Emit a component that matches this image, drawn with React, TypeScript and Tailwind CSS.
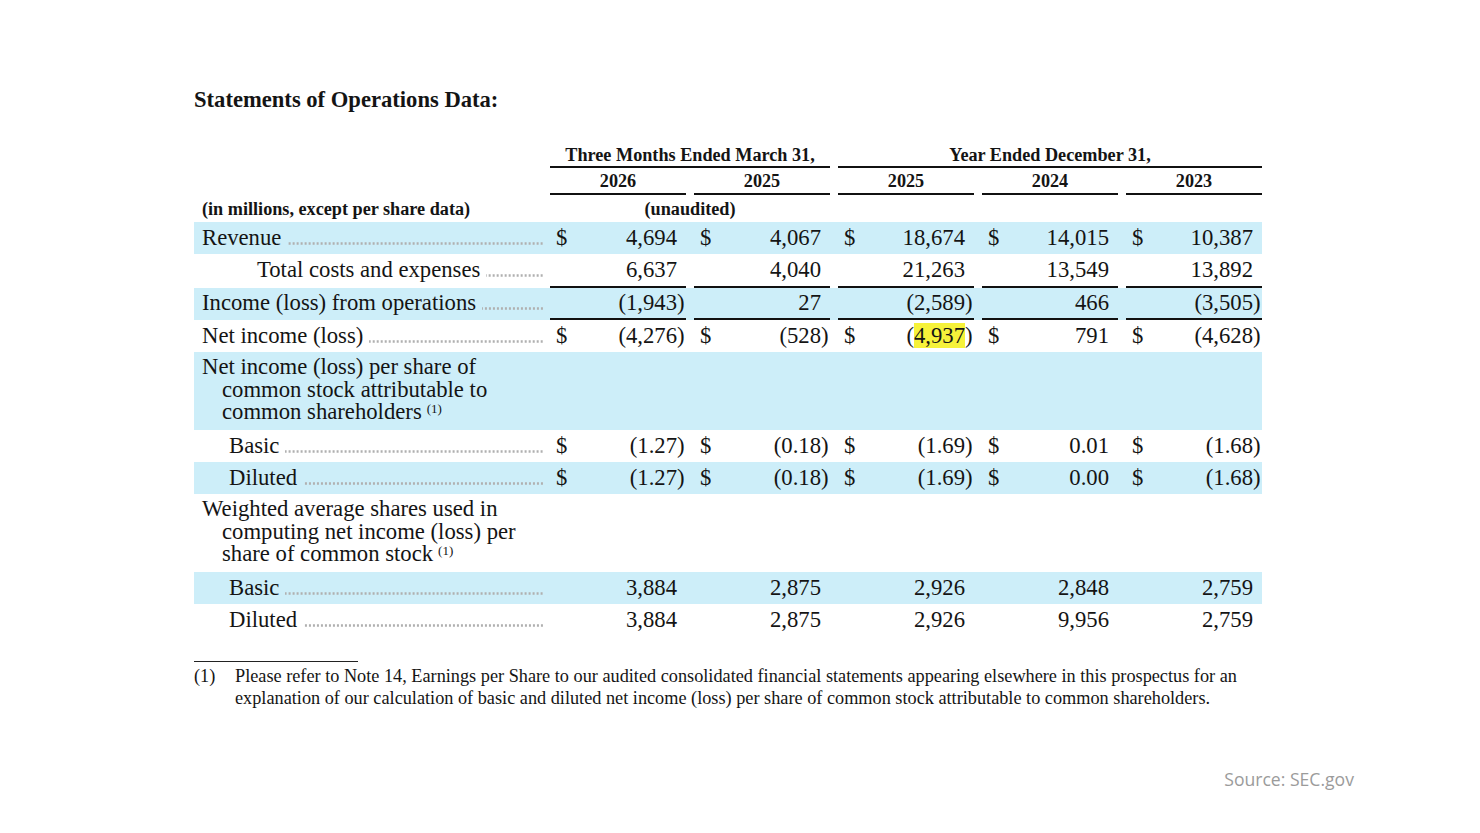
import React from "react";

type Row = {
  label: React.ReactNode;
  pl: string;
  bg: boolean;
  dollar?: boolean;
  values?: string[];
  border?: boolean;
  h: string;
  dots?: boolean;
  multi?: boolean;
  highlight?: number;
};

const BG = "bg-[#cdeef9]";

const rows: Row[] = [
  { label: "Revenue", pl: "pl-2", bg: true, dollar: true, values: ["4,694", "4,067", "18,674", "14,015", "10,387"], h: "h-[32px]", dots: true },
  { label: "Total costs and expenses", pl: "pl-[63px]", bg: false, values: ["6,637", "4,040", "21,263", "13,549", "13,892"], border: true, h: "h-[34px]", dots: true },
  { label: "Income (loss) from operations", pl: "pl-2", bg: true, values: ["(1,943)", "27", "(2,589)", "466", "(3,505)"], border: true, h: "h-[32px]", dots: true },
  { label: "Net income (loss)", pl: "pl-2", bg: false, dollar: true, values: ["(4,276)", "(528)", "(4,937)", "791", "(4,628)"], h: "h-[32px]", dots: true, highlight: 2 },
  {
    label: (
      <>
        Net income (loss) per share of
        <br />
        common stock attributable to
        <br />
        common shareholders<sup className="text-[13px] ml-[5px]">(1)</sup>
      </>
    ),
    pl: "pl-[28px]",
    bg: true,
    h: "h-[78px]",
    multi: true,
  },
  { label: "Basic", pl: "pl-[35px]", bg: false, dollar: true, values: ["(1.27)", "(0.18)", "(1.69)", "0.01", "(1.68)"], h: "h-[32px]", dots: true },
  { label: "Diluted", pl: "pl-[35px]", bg: true, dollar: true, values: ["(1.27)", "(0.18)", "(1.69)", "0.00", "(1.68)"], h: "h-[32px]", dots: true },
  {
    label: (
      <>
        Weighted average shares used in
        <br />
        computing net income (loss) per
        <br />
        share of common stock<sup className="text-[13px] ml-[5px]">(1)</sup>
      </>
    ),
    pl: "pl-[28px]",
    bg: false,
    h: "h-[78px]",
    multi: true,
  },
  { label: "Basic", pl: "pl-[35px]", bg: true, values: ["3,884", "2,875", "2,926", "2,848", "2,759"], h: "h-[32px]", dots: true },
  { label: "Diluted", pl: "pl-[35px]", bg: false, values: ["3,884", "2,875", "2,926", "9,956", "2,759"], h: "h-[32px]", dots: true },
];

function ValueCell({ v, dollar, border, hl }: { v: string; dollar?: boolean; border?: boolean; hl?: boolean }) {
  const neg = v.startsWith("(");
  const inner = neg ? v.slice(1, -1) : v;
  return (
    <div className={`w-[136px] flex items-center ${border ? "border-b-2 border-[#111]" : ""}`}>
      <span className="w-[22px] pl-[6px]">{dollar ? "$" : ""}</span>
      <span className="flex-1 text-right">
        {neg ? "(" : ""}
        {hl ? <span className="bg-[#f6f23a]">{inner}</span> : inner}
      </span>
      <span className="w-[9px]">{neg ? ")" : ""}</span>
    </div>
  );
}

export default function App() {
  return (
    <div className="w-[1480px] h-[833px] bg-white font-['Liberation_Serif',serif] text-[#141414] overflow-hidden">
      <div className="pl-[194px] pt-[86px] w-[1068px] box-content">
        <div className="text-[22.6px] font-bold leading-[28px] h-[28px]">Statements of Operations Data:</div>

        {/* header row 1 */}
        <div className="flex gap-2 mt-[31px] text-[18.2px] font-bold leading-[20px]">
          <div className="w-[348px]" />
          <div className="w-[280px] text-center border-b-2 border-[#111] pb-[1px]">Three Months Ended March 31,</div>
          <div className="w-[424px] text-center border-b-2 border-[#111] pb-[1px]">Year Ended December 31,</div>
        </div>
        {/* header row 2 */}
        <div className="flex gap-2 text-[18.2px] font-bold leading-[20px]">
          <div className="w-[348px]" />
          {["2026", "2025", "2025", "2024", "2023"].map((y, i) => (
            <div key={i} className="w-[136px] text-center border-b-2 border-[#111] pt-[3px] pb-[2px]">
              {y}
            </div>
          ))}
        </div>
        {/* header row 3 */}
        <div className="flex gap-2 text-[18.2px] font-bold leading-[20px] pt-[4px] mb-[3px]">
          <div className="w-[348px] pl-2">(in millions, except per share data)</div>
          <div className="w-[280px] text-center">(unaudited)</div>
        </div>

        {/* data rows */}
        <div className="text-[22.7px]">
          {rows.map((r, idx) => (
            <div key={idx} className={`flex gap-2 ${r.h} ${r.bg ? BG : ""}`}>
              {r.multi ? (
                <div className={`w-[348px] ${r.pl} -indent-[20px] pt-[4px] leading-[22.5px]`}>{r.label}</div>
              ) : (
                <div className={`w-[348px] flex items-center ${r.pl} leading-[24px] ${r.border ? "pb-[2px]" : ""}`}>
                  <span className="whitespace-nowrap">{r.label}</span>
                  {r.dots && (
                    <span className="flex-1 self-center h-[3px] mt-[10px] ml-[6px] mr-[-2px] bg-[radial-gradient(circle,#b0b0b0_40%,transparent_60%)] bg-[length:4px_3px] bg-repeat-x bg-right" />
                  )}
                </div>
              )}
              {r.values &&
                r.values.map((v, i) => (
                  <ValueCell key={i} v={v} dollar={r.dollar} border={r.border} hl={r.highlight === i} />
                ))}
            </div>
          ))}
        </div>

        {/* footnote */}
        <div className="w-[164px] border-t border-[#222] mt-[25px]" />
        <div className="flex text-[18.25px] leading-[22px] mt-[3px]">
          <span className="w-[41px] shrink-0">(1)</span>
          <div className="whitespace-nowrap">
            Please refer to Note 14, Earnings per Share to our audited consolidated financial statements appearing elsewhere in this prospectus for an
            <br />
            explanation of our calculation of basic and diluted net income (loss) per share of common stock attributable to common shareholders.
          </div>
        </div>
      </div>

      <div className="flex justify-end pr-[126px] mt-[58px]">
        <span className="font-['Open_Sans',sans-serif] text-[17.6px] leading-[24px] text-[#9b9b9b]">Source: SEC.gov</span>
      </div>
    </div>
  );
}
